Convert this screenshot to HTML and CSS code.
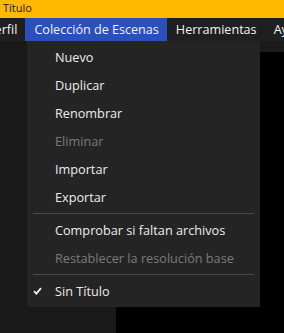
FILE: index.html
```html
<!DOCTYPE html>
<html lang="es">
<head>
  <meta charset="UTF-8" />
  <title>Título</title>
  <link rel="stylesheet" href="styles.css">
</head>
<body>

<div class="window">
  <div class="titlebar">Título</div>

  <div class="menubar">
    <div class="menu-item first">Perfil</div>
    <div class="menu-item active">Colección de Escenas</div>
    <div class="menu-item">Herramientas</div>
    <div class="menu-item">Ayuda</div>
  </div>

  <div class="main">
    <div class="dock"></div>
    <div class="preview">
      <div class="preview-strip"></div>
    </div>
  </div>

  <div class="dropdown">
    <div class="entry">Nuevo</div>
    <div class="entry">Duplicar</div>
    <div class="entry">Renombrar</div>
    <div class="entry disabled">Eliminar</div>
    <div class="entry">Importar</div>
    <div class="entry">Exportar</div>
    <div class="sep"></div>
    <div class="entry">Comprobar si faltan archivos</div>
    <div class="entry disabled">Restablecer la resolución base</div>
    <div class="sep"></div>
    <div class="entry checked">
      <svg class="check" width="9" height="8" viewBox="0 0 9 8">
        <path d="M1 4.2 L3.4 6.6 L8 1.2" fill="none" stroke="#f0f0f0" stroke-width="1.8"/>
      </svg>
      Sin Título
    </div>
  </div>
</div>

</body>
</html>
```

FILE: styles.css
```css
body {
  margin: 0;
  background: #000;
  font-family: "Open Sans", "Noto Sans", sans-serif;
  overflow: hidden;
}
.window {
  position: relative;
  width: 284px;
  height: 333px;
  display: flex;
  flex-direction: column;
  overflow: hidden;
}
.titlebar {
  height: 18px;
  line-height: 15px;
  background: #ffb900;
  color: #1a1a1a;
  font-size: 11px;
  padding-left: 3px;
}
.menubar {
  height: 23px;
  background: #1f1f1f;
  display: flex;
  white-space: nowrap;
}
.menu-item {
  padding: 0 8px 0 9px;
  line-height: 23px;
  color: #f2f2f2;
  font-size: 12.6px;
}
.menu-item.first { margin-left: -22px; }
.menu-item.active { background: #2b4fbd; }

.main {
  flex: 1;
  display: flex;
}
.dock {
  width: 116px;
  background: #191919;
}
.preview {
  flex: 1;
  background: #000;
}
.preview-strip {
  height: 11px;
  background: #1b1b1b;
}

.dropdown {
  position: absolute;
  left: 27px;
  top: 41px;
  width: 233px;
  padding: 2px 0;
  background: #242424;
  box-sizing: border-box;
}
.entry {
  position: relative;
  height: 28px;
  line-height: 28px;
  padding-left: 28px;
  font-size: 12.7px;
  color: #ececec;
  white-space: nowrap;
}
.entry.disabled { color: #7a7a7a; }
.sep {
  height: 1px;
  margin: 2px 6px;
  background: #4a4a4a;
}
.check {
  position: absolute;
  left: 6px;
  top: 10px;
}
```
